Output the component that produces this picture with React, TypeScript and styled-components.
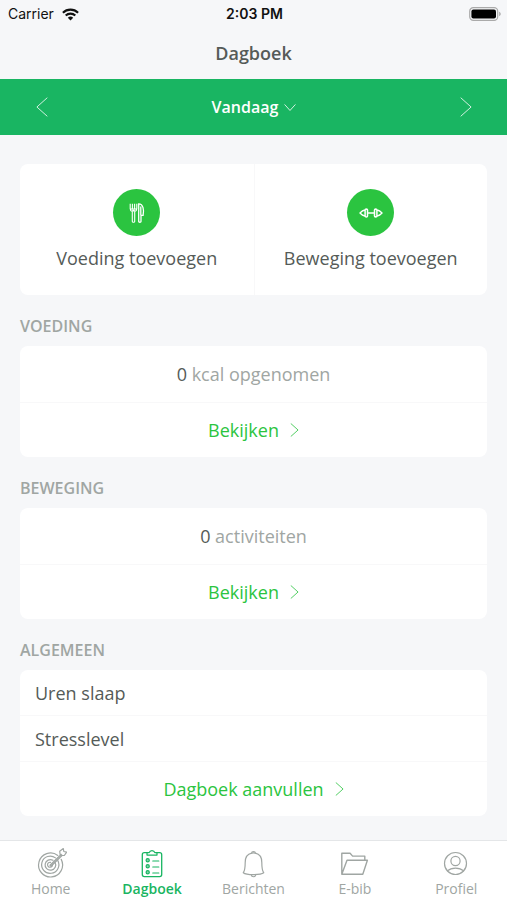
import React from 'react';
import styled, { createGlobalStyle } from 'styled-components';

const color = {
  page: '#f6f7f9',
  bar: '#19b562',
  green: '#2bc440',
  text: '#555b58',
  muted: '#a0a6a3',
  line: '#f8f8f9',
};

const GlobalStyle = createGlobalStyle`
  *, *::before, *::after { box-sizing: border-box; }
  body { margin: 0; background: ${color.page}; }
  button { font: inherit; color: inherit; background: none; border: 0; padding: 0; cursor: pointer; }
  a { color: inherit; text-decoration: none; }
  h1, h2, p, ul { margin: 0; padding: 0; }
  ul { list-style: none; }
  svg { display: block; flex: none; }
`;

const Screen = styled.div`
  min-height: 100vh;
  display: flex;
  flex-direction: column;
  background: ${color.page};
  color: ${color.text};
  font-family: 'Open Sans', 'Noto Sans', sans-serif;
  font-size: 18px;
  line-height: 24px;
`;

const StatusBar = styled.div`
  display: grid;
  grid-template-columns: 1fr auto 1fr;
  align-items: center;
  height: 28px;
  padding: 0 6px 0 8px;
  color: #111;
  font-family: Inter, 'Liberation Sans', sans-serif;
  font-size: 14px;
  line-height: 20px;
`;

const Carrier = styled.span`
  display: flex;
  align-items: center;
  gap: 8px;
`;

const Clock = styled.span`
  font-weight: 600;
`;

const Battery = styled.span`
  justify-self: end;
`;

const Title = styled.h1`
  padding: 13px 0 14px;
  text-align: center;
  font-size: 18px;
  font-weight: 600;
  line-height: 24px;
`;

const DayBar = styled.nav`
  display: flex;
  justify-content: space-between;
  align-items: center;
  height: 56px;
  padding: 0 19px 0 20px;
  background: ${color.bar};
  color: #fff;
`;

const ArrowButton = styled.button`
  display: grid;
  place-items: center;
  width: 44px;
  height: 44px;
`;

const DayButton = styled.button`
  display: flex;
  align-items: center;
  gap: 6px;
  font-size: 16px;
  font-weight: 600;
`;

const Content = styled.main`
  flex: 1;
  padding: 29px 20px 24px;
`;

const Card = styled.div`
  overflow: hidden;
  border-radius: 8px;
  background: #fff;
`;

const ActionCard = styled(Card)`
  display: grid;
  grid-template-columns: 1fr 1fr;
`;

const Action = styled.button`
  display: flex;
  flex-direction: column;
  align-items: center;
  gap: 10px;
  padding: 25px 0;

  & + & { border-left: 1px solid ${color.line}; }
`;

const Disc = styled.span`
  display: grid;
  place-items: center;
  width: 47px;
  height: 47px;
  border-radius: 50%;
  background: ${color.green};
  color: #fff;
`;

const SectionTitle = styled.h2`
  padding: 21px 0 10px;
  color: ${color.muted};
  font-size: 16px;
  font-weight: 600;
  line-height: 20px;
  text-transform: uppercase;
`;

const Summary = styled.p`
  padding: 16px 0;
  text-align: center;
  color: ${color.muted};
`;

const Count = styled.span`
  color: ${color.text};
`;

const MoreLink = styled.a`
  display: flex;
  justify-content: center;
  align-items: center;
  gap: 11px;
  padding: 15px 0;
  border-top: 1px solid ${color.line};
  color: ${color.green};
`;

const Entry = styled.li`
  padding: 11px 15px 10px;

  & + & { border-top: 1px solid ${color.line}; }
`;

const TabBar = styled.nav`
  display: grid;
  grid-template-columns: repeat(5, 1fr);
  border-top: 1px solid #e4e6e8;
  background: #fff;
`;

const Tab = styled.a<{ $active?: boolean }>`
  display: flex;
  flex-direction: column;
  align-items: center;
  padding: 7px 0 1px;
  color: ${(p) => (p.$active ? color.bar : color.muted)};
  font-size: 14px;
  font-weight: ${(p) => (p.$active ? 600 : 400)};
  line-height: 20px;
`;

type ChevronProps = { direction: 'left' | 'right' | 'down'; width: number; height: number };

const chevrons = {
  left: { box: '0 0 12 20', d: 'M11.3 .7 .9 10l10.4 9.3' },
  right: { box: '0 0 12 20', d: 'M.7 .7 11.1 10 .7 19.3' },
  down: { box: '0 0 20 12', d: 'M.7 .7 10 11.1 19.3 .7' },
};

const Chevron = ({ direction, width, height }: ChevronProps) => (
  <svg width={width} height={height} viewBox={chevrons[direction].box} fill="none" opacity=".8" aria-hidden="true">
    <path d={chevrons[direction].d} stroke="currentColor" strokeWidth="1" vectorEffect="non-scaling-stroke" />
  </svg>
);

const WifiIcon = () => (
  <svg width="17" height="13" viewBox="0 0 17 13" fill="none" stroke="currentColor" strokeWidth="2.1" aria-label="Wifi">
    <path d="M.9 4.7a10.9 10.9 0 0 1 15.2 0M3.7 7.6a6.9 6.9 0 0 1 9.6 0" />
    <path d="M8.5 12.6 5.8 9.8a3.9 3.9 0 0 1 5.4 0Z" fill="currentColor" stroke="none" />
  </svg>
);

const BatteryIcon = () => (
  <svg width="32" height="14" viewBox="0 0 32 14" aria-label="Batterij">
    <rect x=".7" y=".7" width="28" height="12.6" rx="3.6" fill="none" stroke="#aaa" strokeWidth="1.2" />
    <rect x="2.4" y="2.4" width="24.6" height="9.2" rx="2" fill="#000" />
    <path d="M30.2 4.8c2 .7 2 3.7 0 4.4Z" fill="#aaa" />
  </svg>
);

const CutleryIcon = () => (
  <svg width="16" height="20" viewBox="0 0 16 20" fill="none" stroke="currentColor" aria-hidden="true">
    <path d="M1.2 .7v5.1c0 1.7 1 2.4 2.1 2.8v9.8c0 1.1 2.4 1.1 2.4 0V8.6C6.8 8.2 7.8 7.500 7.800 5.800V.7M3.400 .7v5M5.600 .7v5M1.300 6h6.400" strokeWidth="1.100" />
    <path d="M2.600 6.500h3.800L5.300 8.400H3.700Z" fill="currentColor" stroke="none" />
    <path d="M9.700 .8v17.600c0 1.100 2.300 1.100 2.300 0v-6.100h2.100c1-5.100.3-11.500-4.400-11.500ZM11.800 3.500v8.800" strokeWidth="1.300" />
  </svg>
);

const DumbbellIcon = () => (
  <svg width="24" height="12" viewBox="0 0 24 12" fill="none" stroke="currentColor" strokeWidth="1.5" strokeLinejoin="round" aria-hidden="true">
    <path d="M8.500 6h7M8.500 3v6c0 1.300-2.400 1.300-2.400 0V3c0-1.300 2.400-1.300 2.400 0ZM6 2.900 3.300 4 1 6l2.300 2L6 9.100" />
    <path d="M15.500 3v6c0 1.300 2.400 1.300 2.400 0V3c0-1.300-2.400-1.300-2.400 0ZM18 2.900 20.700 4 23 6l-2.300 2L18 9.100" />
  </svg>
);

const TabSvg = ({ children }: { children: React.ReactNode }) => (
  <svg width="32" height="31" viewBox="0 0 32 31" fill="none" stroke="currentColor" strokeWidth="1.2" strokeLinejoin="round" strokeLinecap="round" aria-hidden="true">
    {children}
  </svg>
);

const TargetIcon = () => (
  <TabSvg>
    <path d="M22.800 7.400a12 12 0 1 0 3.400 4" />
    <path d="M20.500 9.900a8.600 8.600 0 1 0 2.300 2.700" />
    <path d="M18 12.300a5.300 5.300 0 1 0 2 2" />
    <path d="M15.500 14.300a2.500 2.500 0 1 0 2 2" />
    <path d="m15 17.300 11.300-11M16 18.300l11.300-11M25.200 7.200l-.5-4L28.300.6l.5 2.900 2.800.7-2.300 3.300-4.100-.3M15 17.300l1 1" />
  </TabSvg>
);

const ClipboardIcon = () => (
  <TabSvg>
    <path d="M11 4.700H8.300A2 2 0 0 0 6.300 6.700v19.900a2 2 0 0 0 2 2h15.400a2 2 0 0 0 2-2V6.700a2 2 0 0 0-2-2H21" strokeWidth="1.300" />
    <path d="M11 7.100V4.700h2.200c.7-2.800 4.900-2.800 5.600 0H21v2.400Z" />
    <path d="M16.800 13h6M16.800 19h6M16.800 25h6" />
    <g fill="currentColor" fillOpacity=".55">
      <circle cx="11.700" cy="12.200" r="1.600" />
      <circle cx="11.700" cy="18.200" r="1.600" />
      <circle cx="11.700" cy="24.200" r="1.600" />
    </g>
  </TabSvg>
);

const BellIcon = () => (
  <TabSvg>
    <path d="M14.600 5.200c0-2.200 3.800-2.200 3.800 0 4.600 1 6.400 4.400 6.400 9.200 0 4.600 0 7.600 1.900 10.300-3 2.500-17.400 2.500-20.400 0 1.900-2.700 1.900-5.700 1.900-10.300 0-4.800 1.800-8.200 6.400-9.200Z" />
    <path d="M14.600 5.200c1.200-.4 2.600-.4 3.800 0M14.200 26.700c.4 2.700 4.200 2.700 4.600 0" />
  </TabSvg>
);

const FolderIcon = () => (
  <TabSvg>
    <path d="M2.800 26.300V5.300h8.300l2.500 2.800h12.200v4.100M2.800 26.300l5.200-14.100h20.400l-4.600 14.100Z" strokeWidth="1.400" />
  </TabSvg>
);

const ProfileIcon = () => (
  <TabSvg>
    <circle cx="15.500" cy="15.500" r="11" />
    <circle cx="15.500" cy="13" r="4.600" />
    <path d="M7.400 22.900c4-3.800 12.200-3.800 16.200 0" />
  </TabSvg>
);

const tabs = [
  { label: 'Home', icon: <TargetIcon /> },
  { label: 'Dagboek', icon: <ClipboardIcon />, active: true },
  { label: 'Berichten', icon: <BellIcon /> },
  { label: 'E-bib', icon: <FolderIcon /> },
  { label: 'Profiel', icon: <ProfileIcon /> },
];

const More = ({ children }: { children: React.ReactNode }) => (
  <MoreLink href="#">
    {children}
    <Chevron direction="right" width={9} height={14} />
  </MoreLink>
);

export default function App() {
  return (
    <Screen>
      <GlobalStyle />
      <StatusBar>
        <Carrier>Carrier <WifiIcon /></Carrier>
        <Clock>2:03 PM</Clock>
        <Battery><BatteryIcon /></Battery>
      </StatusBar>
      <Title>Dagboek</Title>
      <DayBar>
        <ArrowButton aria-label="Vorige dag"><Chevron direction="left" width={12} height={20} /></ArrowButton>
        <DayButton>Vandaag <Chevron direction="down" width={12} height={7} /></DayButton>
        <ArrowButton aria-label="Volgende dag"><Chevron direction="right" width={12} height={20} /></ArrowButton>
      </DayBar>
      <Content>
        <ActionCard>
          <Action><Disc><CutleryIcon /></Disc>Voeding toevoegen</Action>
          <Action><Disc><DumbbellIcon /></Disc>Beweging toevoegen</Action>
        </ActionCard>
        <section>
          <SectionTitle>Voeding</SectionTitle>
          <Card>
            <Summary><Count>0</Count> kcal opgenomen</Summary>
            <More>Bekijken</More>
          </Card>
        </section>
        <section>
          <SectionTitle>Beweging</SectionTitle>
          <Card>
            <Summary><Count>0</Count> activiteiten</Summary>
            <More>Bekijken</More>
          </Card>
        </section>
        <section>
          <SectionTitle>Algemeen</SectionTitle>
          <Card>
            <ul>
              <Entry>Uren slaap</Entry>
              <Entry>Stresslevel</Entry>
            </ul>
            <More>Dagboek aanvullen</More>
          </Card>
        </section>
      </Content>
      <TabBar>
        {tabs.map((t) => (
          <Tab key={t.label} href="#" $active={t.active} aria-current={t.active ? 'page' : undefined}>
            {t.icon}
            {t.label}
          </Tab>
        ))}
      </TabBar>
    </Screen>
  );
}
